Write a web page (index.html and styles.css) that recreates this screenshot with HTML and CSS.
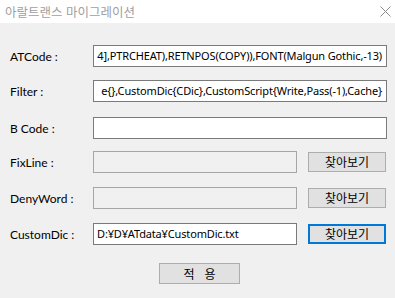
FILE: index.html
```html
<!DOCTYPE html>
<html lang="ko">
<head>
<meta charset="utf-8">
<link rel="stylesheet" href="styles.css">
</head>
<body>
<div class="window">
  <div class="titlebar">
    <span class="title">아랄트랜스 마이그레이션</span>
    <svg class="close" width="11" height="11" viewBox="0 0 11 11"><path d="M0.5 0.5 L10.5 10.5 M10.5 0.5 L0.5 10.5" stroke="#8a8a8a" stroke-width="1" fill="none"/></svg>
  </div>
  <div class="form">
    <div class="row r1">
      <span class="label">ATCode :</span>
      <div class="box wide"><span class="val">4],PTRCHEAT),RETNPOS(COPY)),FONT(Malgun Gothic,-13)</span></div>
    </div>
    <div class="row r2">
      <span class="label">Filter :</span>
      <div class="box wide"><span class="val">e{},CustomDic{CDic},CustomScript{Write,Pass(-1),Cache}</span></div>
    </div>
    <div class="row r3">
      <span class="label">B Code :</span>
      <div class="box wide"></div>
    </div>
    <div class="row r4">
      <span class="label">FixLine :</span>
      <div class="box narrow disabled"></div>
      <button class="btn">찾아보기</button>
    </div>
    <div class="row r5">
      <span class="label">DenyWord :</span>
      <div class="box narrow disabled"></div>
      <button class="btn">찾아보기</button>
    </div>
    <div class="row r6">
      <span class="label">CustomDic :</span>
      <div class="box narrow left"><span class="val">D:¥D¥ATdata¥CustomDic.txt</span></div>
      <button class="btn focus">찾아보기</button>
    </div>
    <div class="apply-row">
      <button class="btn apply">적&nbsp;&nbsp;&nbsp;용</button>
    </div>
  </div>
</div>
</body>
</html>
```
FILE: styles.css
```css
html, body {
  margin: 0;
  padding: 0;
}
body {
  width: 395px;
  height: 298px;
  background: #f0f0f0;
  font-family: "Noto Sans", "Noto Sans CJK KR", sans-serif;
  font-size: 11px;
  color: #000;
  overflow: hidden;
}
.window {
  display: flex;
  flex-direction: column;
}
.titlebar {
  height: 23px;
  background: #ffffff;
  display: flex;
  align-items: center;
  justify-content: space-between;
  padding: 0 4px 0 5px;
}
.title {
  font-family: "Noto Sans CJK KR", sans-serif;
  font-size: 12.5px;
  color: #a0a0a0;
}
.form {
  display: flex;
  flex-direction: column;
  padding: 22px 8px 0 10px;
}
.row {
  display: flex;
  align-items: center;
  height: 22px;
}
.r2 { margin-top: 13px; }
.r3 { margin-top: 15px; }
.r4 { margin-top: 12px; }
.r5 { margin-top: 14px; }
.r6 { margin-top: 14px; }
.label {
  font-family: "Lato", "Noto Sans", sans-serif;
  font-size: 12px;
  width: 83px;
  flex: none;
  white-space: nowrap;
  padding-top: 1px;
}
.box {
  height: 22px;
  box-sizing: border-box;
  border: 1px solid #7a7a7a;
  background: #fff;
  display: flex;
  align-items: center;
  justify-content: flex-end;
  overflow: hidden;
  padding: 0 4px 1px 3px;
  white-space: nowrap;
}
.box.wide {
  width: 294px;
}
.box.narrow {
  width: 204px;
}
.box.left {
  justify-content: flex-start;
}
.box.disabled {
  background: #f0f0f0;
  border-color: #a6a6a6;
}
.val {
  flex: none;
  letter-spacing: -0.15px;
}
.btn {
  font-family: "Noto Sans CJK KR", sans-serif;
  font-size: 12px;
  color: #000;
  background: #e1e1e1;
  border: 1px solid #adadad;
  box-sizing: border-box;
  padding: 0;
  margin: 0 0 0 11px;
  width: 78px;
  height: 20px;
  line-height: 16px;
}
.btn.focus {
  border: 2px solid #0078d7;
}
.apply-row {
  display: flex;
  margin-top: 18px;
}
.btn.apply {
  margin-left: 149px;
  width: 81px;
  height: 21px;
}
```
